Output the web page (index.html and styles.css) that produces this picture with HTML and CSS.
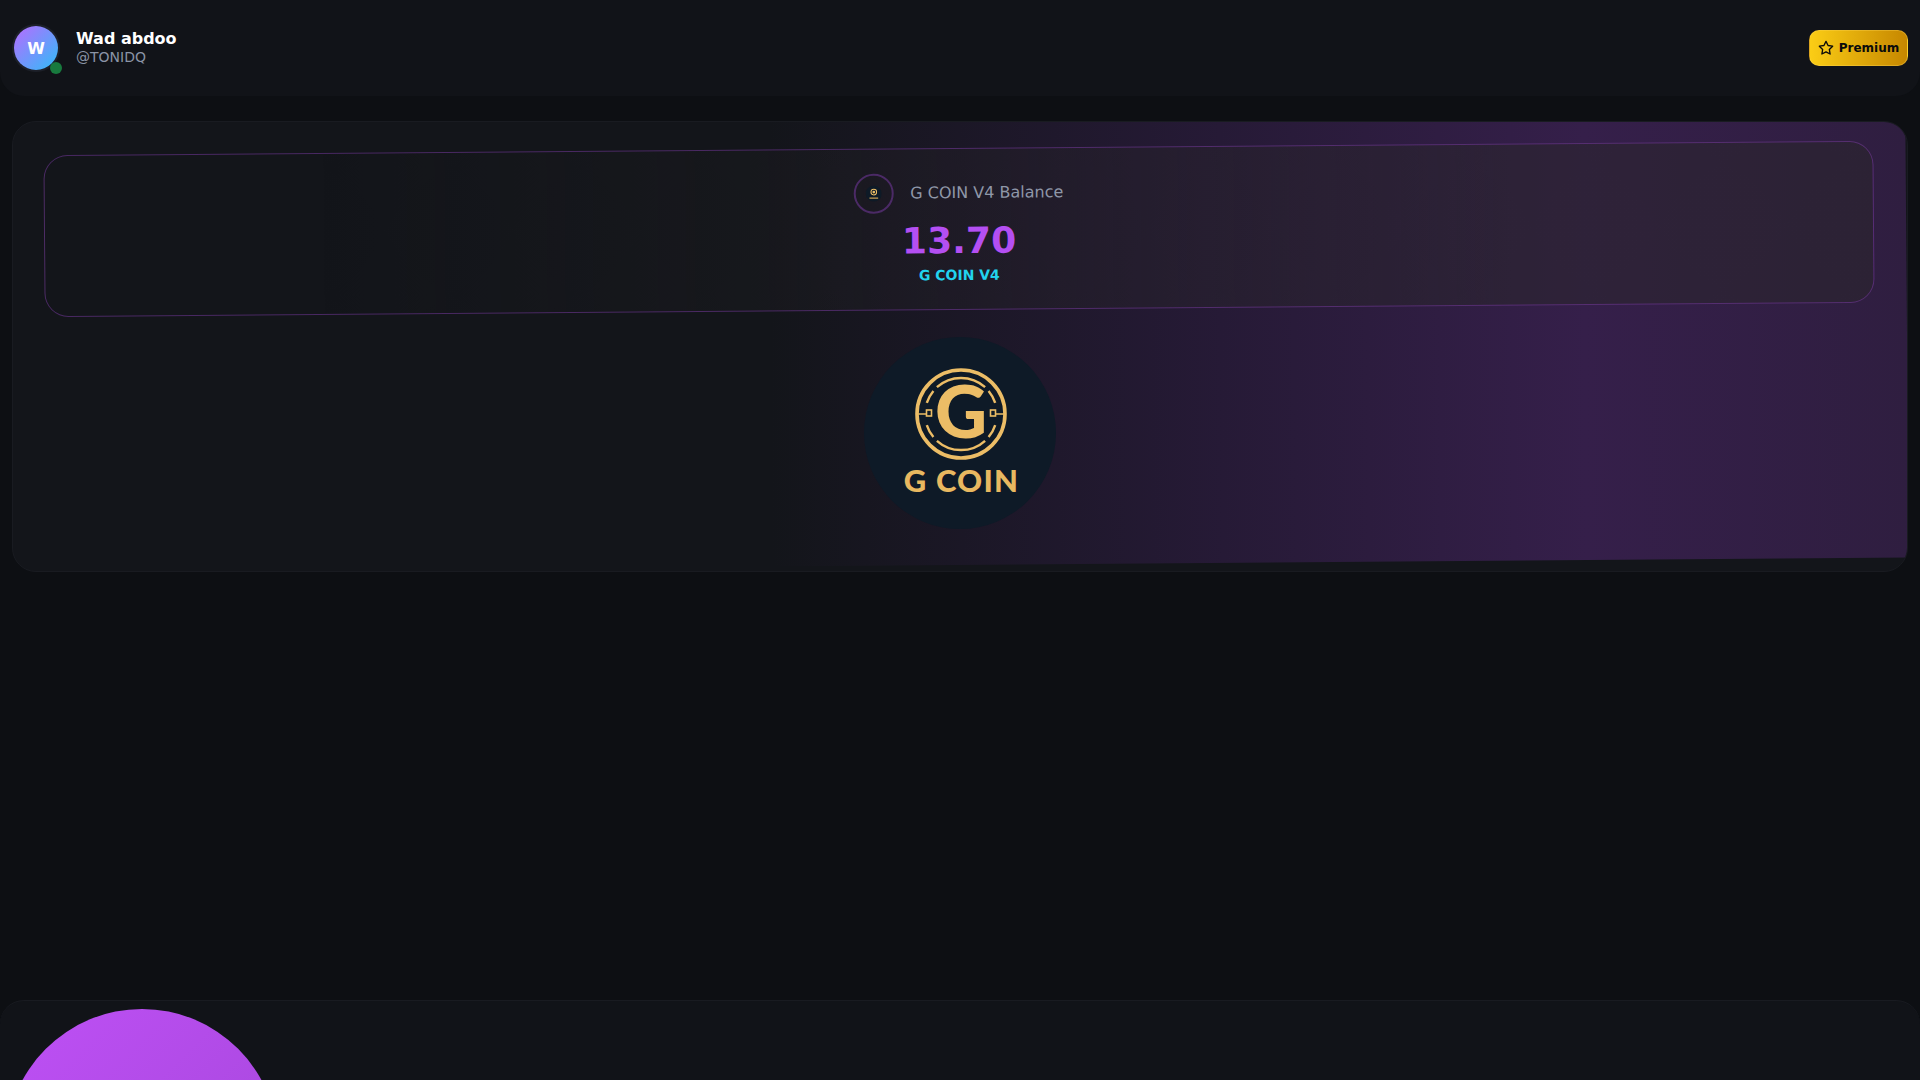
FILE: index.html
```html
<!DOCTYPE html>
<html lang="en">
<head>
<meta charset="utf-8">
<title>G COIN V4</title>
<link rel="stylesheet" href="styles.css">
</head>
<body>
<header class="topbar">
  <div class="user">
    <div class="avatar">W<span class="status"></span></div>
    <div class="user-text">
      <div class="user-name">Wad abdoo</div>
      <div class="user-handle">@TONIDQ</div>
    </div>
  </div>
  <button class="premium" type="button">
    <svg class="star" viewBox="0 0 24 24" fill="none" stroke="currentColor" stroke-width="2" stroke-linecap="round" stroke-linejoin="round"><path d="M12 2l3.09 6.26L22 9.27l-5 4.87 1.18 6.88L12 17.77l-6.18 3.25L7 14.14 2 9.27l6.91-1.01L12 2z"/></svg>
    <span>Premium</span>
  </button>
</header>

<main class="content">
  <section class="card">
    <div class="glow"></div>
    <div class="balance">
      <div class="balance-head">
        <span class="mini-logo">
          <svg class="mini-svg" viewBox="0 0 192 192" aria-hidden="true">
            <circle cx="96" cy="96" r="96" fill="#0e1a27"/>
            <circle cx="97" cy="77" r="40" fill="#ecbd66"/>
            <circle cx="97" cy="77" r="28" fill="#0e1a27"/>
            <circle cx="97" cy="77" r="16" fill="#ecbd66"/>
            <rect x="45" y="142" width="104" height="16" fill="#c9a058"/>
          </svg>
        </span>
        <span class="balance-label">G COIN V4 Balance</span>
      </div>
      <div class="balance-value">13.70</div>
      <div class="balance-unit">G COIN V4</div>
    </div>
    <svg class="big-logo" viewBox="0 0 192 192">
      <circle cx="96" cy="96" r="96" fill="#0e1a27"/>
      <g fill="none" stroke="#ecbd66">
        <circle cx="97" cy="77" r="44" stroke-width="3.6"/>
        <path d="M72.9 50.2 A36 36 0 0 1 121.1 50.2 M124.6 53.9 A36 36 0 0 1 131.2 65.9 M131.2 88.1 A36 36 0 0 1 124.6 100.1 M121.1 103.8 A36 36 0 0 1 72.9 103.8 M69.4 100.1 A36 36 0 0 1 62.8 88.1 M62.8 65.9 A36 36 0 0 1 69.4 53.9" stroke-width="2.4"/>
        <path d="M53 77 H62 M132 77 H141" stroke-width="1.6"/>
        <rect x="62.5" y="73" width="5" height="6" stroke-width="1.6"/>
        <rect x="126.5" y="73" width="5" height="6" stroke-width="1.6"/>
      </g>
      <text class="logo-g" x="97" y="101" text-anchor="middle">G</text>
      <text class="logo-word" x="97.5" y="155" text-anchor="middle">G COIN</text>
    </svg>
  </section>
</main>

<footer class="dock">
  <div class="orb"></div>
</footer>
</body>
</html>
```
FILE: styles.css
```css
* { box-sizing: border-box; }
html, body { height: 100%; }
body {
  margin: 0;
  height: 100vh;
  overflow: hidden;
  display: flex;
  flex-direction: column;
  background: #0d0f13;
  color: #fff;
  font-family: "DejaVu Sans", sans-serif;
}

.topbar {
  height: 96px;
  flex: none;
  display: flex;
  align-items: center;
  justify-content: space-between;
  padding: 0 12px 0 14px;
  background: #111318;
  border-radius: 0 0 24px 24px;
}
.user { display: flex; align-items: center; gap: 18px; }
.avatar {
  position: relative;
  width: 44px;
  height: 44px;
  border-radius: 50%;
  display: flex;
  align-items: center;
  justify-content: center;
  font-size: 16px;
  font-weight: 700;
  background: linear-gradient(135deg, #b86bff, #30bdf8);
  box-shadow: 0 0 0 2px #1d2029;
}
.status {
  position: absolute;
  right: -4px;
  bottom: -4px;
  width: 12px;
  height: 12px;
  border-radius: 50%;
  background: #187a3e;
}
.user-text { display: flex; flex-direction: column; margin-top: -1px; }
.user-name { font-size: 16px; font-weight: 700; line-height: 18px; }
.user-handle { font-size: 14px; line-height: 18px; color: #8a94a6; }

.premium {
  width: 99px;
  height: 36px;
  display: flex;
  align-items: center;
  justify-content: center;
  gap: 5px;
  padding: 0;
  border: 1px solid rgba(255, 214, 90, .35);
  border-radius: 10px;
  background: linear-gradient(90deg, #fbcd15, #c68700);
  color: #0b0b0b;
  font: 700 12px "DejaVu Sans", sans-serif;
}
.star { width: 16px; height: 16px; }

.content { flex: 1; padding: 25px 12px 0 12px; }
.card {
  position: relative;
  height: 451px;
  overflow: hidden;
  border: 1px solid #191b21;
  border-radius: 24px;
  background: #13151a;
  padding: 26px 33px 0 31px;
  display: flex;
  flex-direction: column;
  align-items: center;
}
.glow {
  position: absolute;
  left: -1px;
  right: 0;
  top: -8px;
  height: 451px;
  transform: rotate(-.46deg);
  background: linear-gradient(90deg, rgba(54,30,78,0) 40%, rgba(54,30,78,.5) 62%, #351f4a 83%, #2f1e40 100%);
}
.balance {
  position: relative;
  width: 100%;
  height: 162px;
  padding-top: 24px;
  transform: rotate(-.45deg);
  border: 1px solid rgba(126, 60, 170, .5);
  border-radius: 24px;
  background: linear-gradient(90deg, rgba(40,38,40,0) 15%, rgba(40,38,40,.5) 80%);
  display: flex;
  flex-direction: column;
  align-items: center;
}
.balance-head { display: flex; align-items: center; gap: 16px; height: 40px; }
.mini-logo {
  width: 40px;
  height: 40px;
  display: flex;
  align-items: center;
  justify-content: center;
  border: 2px solid #4b2a66;
  border-radius: 50%;
}
.mini-svg { width: 16px; height: 16px; }
.balance-label { font-size: 16px; color: #8f97a8; margin-top: -2px; }
.balance-value {
  margin-top: 6px;
  font-size: 36px;
  font-weight: 700;
  line-height: 44px;
  color: #b44ff2;
  letter-spacing: .1px;
}
.balance-unit { margin-top: 3px; font-size: 14px; font-weight: 700; line-height: 18px; color: #22d3ee; }

.big-logo {
  position: relative;
  width: 192px;
  height: 192px;
  margin: 27px 0 0 2px;
  flex: none;
}
.logo-g { font: 900 72px Lato, sans-serif; fill: #ecbd66; }
.logo-word { font: 900 31px Lato, sans-serif; fill: #e8b860; letter-spacing: 1.2px; }

.dock {
  flex: none;
  height: 80px;
  overflow: hidden;
  padding: 8px 0 0 6px;
  background: #111318;
  border-top: 1px solid #191b21;
  border-radius: 24px 24px 0 0;
}
.orb {
  width: 272px;
  height: 272px;
  border-radius: 50%;
  background: linear-gradient(135deg, #be50f5, #a346d8);
}
```
